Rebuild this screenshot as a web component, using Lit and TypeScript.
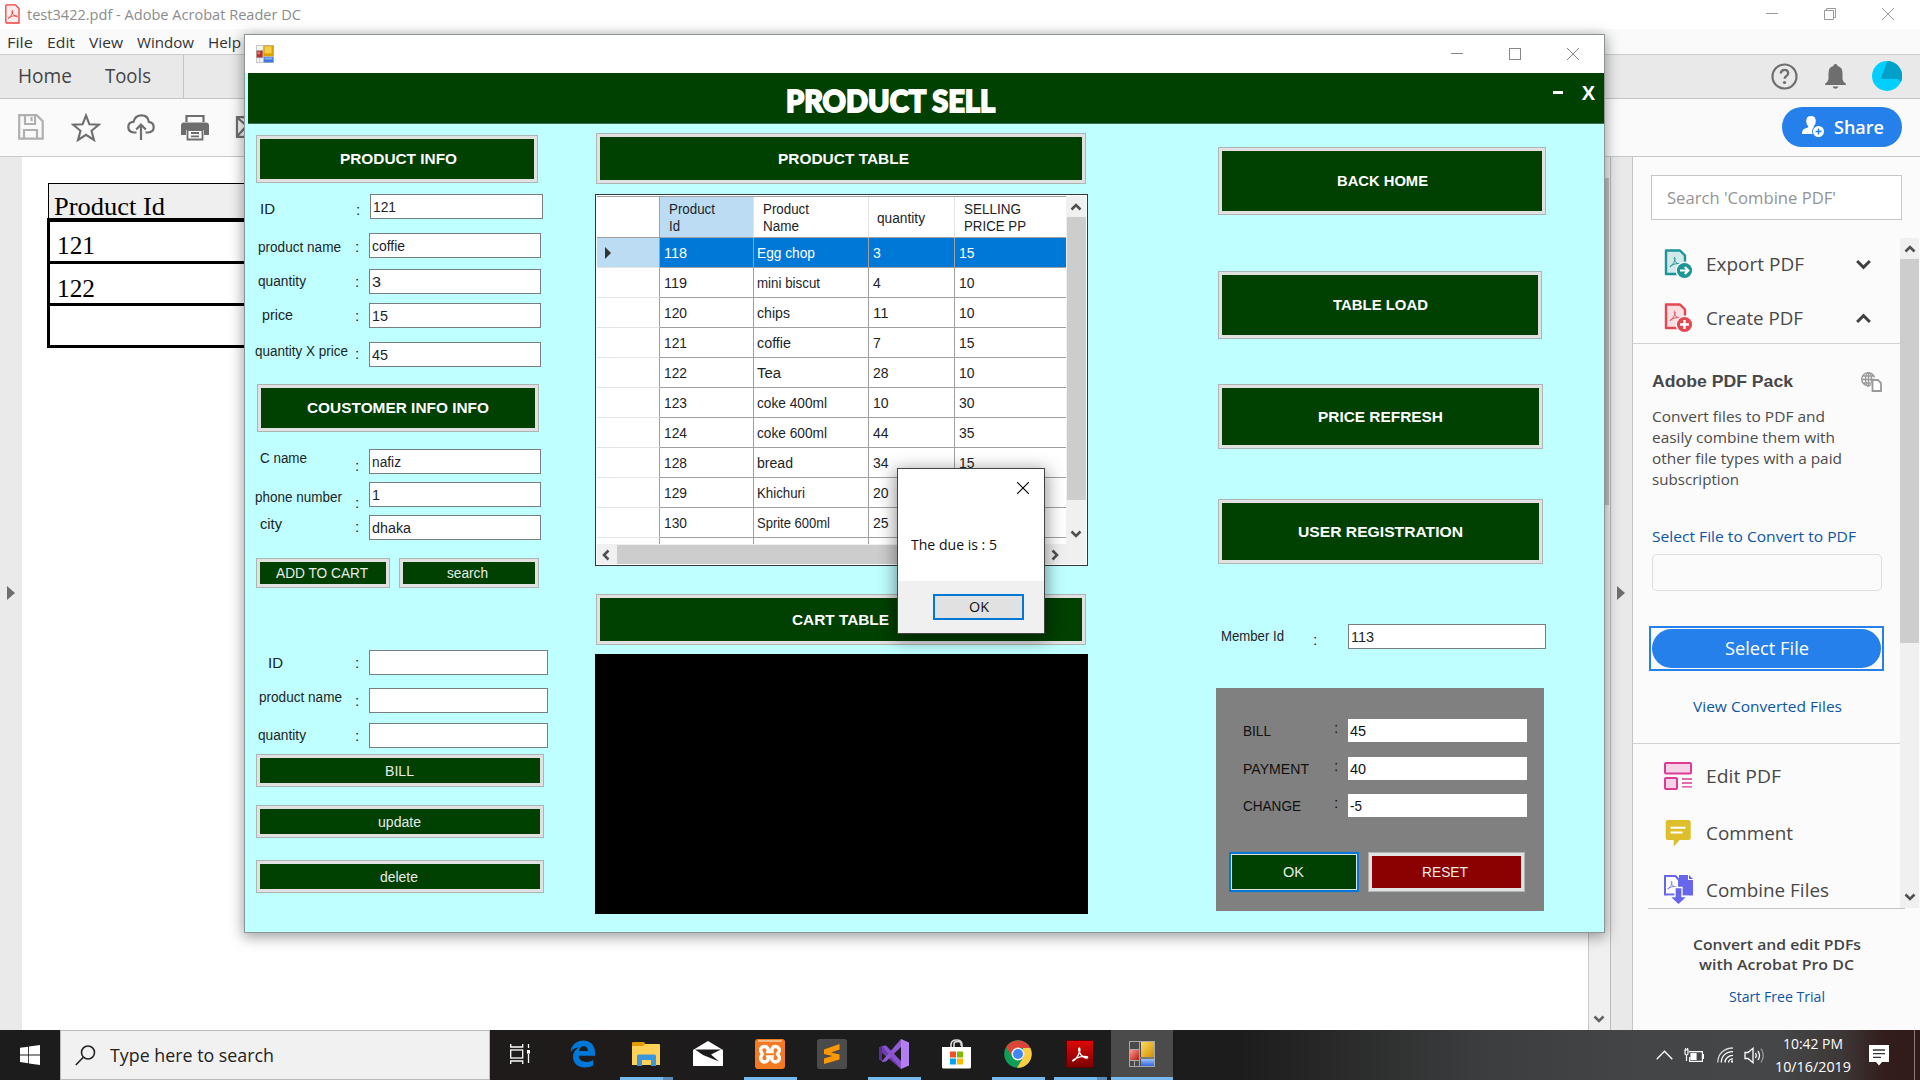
import { LitElement, html, css, svg, nothing } from "lit";
import { customElement, property } from "lit/decorators.js";

/* One line of text, condensed or widened so that it fills a given width. */
@customElement("fit-text")
class FitText extends LitElement {
  @property({ type: Number }) w = 0;
  @property() text = "";
  static styles = css`
    :host { display: block; flex: none; white-space: pre; }
    span { display: inline-block; transform-origin: 0 50%; }
  `;
  render() {
    return html`<span>${this.text}</span>`;
  }
  updated() {
    const s = this.renderRoot.querySelector("span") as HTMLElement;
    if (!this.w) return;
    s.style.transform = "none";
    const natural = s.getBoundingClientRect().width;
    s.style.transform = `scaleX(${this.w / natural})`;
    this.style.width = `${this.w}px`;
  }
}

const t = (text: string, w: number, cls = "") =>
  html`<fit-text class=${cls} .w=${w} .text=${text}></fit-text>`;

const chevron = (d: "up" | "down" | "left" | "right", size = 12, color = "#505050", sw = 2.6) => {
  const pts = {
    up: "1.5,8.5 6,4 10.5,8.5",
    down: "1.5,3.5 6,8 10.5,3.5",
    left: "8.5,1.5 4,6 8.5,10.5",
    right: "3.5,1.5 8,6 3.5,10.5",
  }[d];
  return html`<svg width=${size} height=${size} viewBox="0 0 12 12"><polyline points=${pts} fill="none" stroke=${color} stroke-width=${sw}/></svg>`;
};

const acroSwirl = svg`<path d="M3 17c2-1 5-5 6.500-9 .6-2 .6-4-.2-4s-1 2 0 4c1.300 3 4 5.500 7 6 1.500.2 2-.9.500-1.300-3-.7-8 .3-11 1.800C3.500 15.500 2 16.800 3 17z" fill="none" stroke="currentColor" stroke-width="1.300"/>`;

const formIcon = (s: number, h = s) => html`<svg width=${s} height=${h} viewBox="0 0 26 26" preserveAspectRatio="none">
  <rect width="26" height="26" fill="#b9b9b9"/><rect x="1" y="1" width="9" height="6" fill="#f4f4f4"/>
  <rect x="1" y="19" width="4" height="6" fill="#f4f4f4"/><rect x="6" y="19" width="4" height="6" fill="#f4f4f4"/>
  <rect x="1" y="8.500" width="8.500" height="9.500" fill="#b5332b"/><rect x="2" y="9.500" width="4" height="4" fill="#e07a70"/>
  <rect x="11.500" y="1" width="13.500" height="15" fill="#d9a300"/><rect x="12.500" y="2" width="10" height="10" fill="#f7ce46"/>
  <rect x="11.500" y="17.500" width="13.500" height="7.500" fill="#3f78e0"/><rect x="12.500" y="18" width="11" height="3" fill="#86aef5"/></svg>`;

const darkFormIcon = html`<svg width="26" height="26" viewBox="0 0 26 26">
  <defs><linearGradient id="fy" x2="1" y2="1"><stop offset="0" stop-color="#ffd95e"/><stop offset="1" stop-color="#cf9100"/></linearGradient>
  <linearGradient id="fb" x2="0" y2="1"><stop offset="0" stop-color="#9cc0ff"/><stop offset="1" stop-color="#3068dc"/></linearGradient>
  <linearGradient id="fr" x2="1" y2="1"><stop offset="0" stop-color="#ff9a92"/><stop offset="1" stop-color="#b41a12"/></linearGradient></defs>
  <rect x=".5" y=".5" width="25" height="25" fill="#4a4a4a" stroke="#a8a8a8"/>
  <path d="M0 8.500h11M10.500 0v26M0 19.500h11M5.500 19.500v6" stroke="#a8a8a8"/>
  <rect x="12" y="1" width="13" height="15" fill="url(#fy)"/><rect x="1" y="9" width="9" height="10" fill="url(#fr)"/>
  <rect x="12" y="18" width="13" height="7" fill="url(#fb)"/><path d="M11 17h15" stroke="#a8a8a8"/></svg>`;

const pdfTool = (color: string, tint: string, sign: unknown) => html`<svg width="29" height="30" viewBox="0 0 29 30">
  <path d="M2 1.500h14l5 5V25H2z" fill=${tint} stroke=${color} stroke-width="2.400" stroke-linejoin="round"/>
  <g style="color:${color}" transform="translate(4 5.500) scale(.72)">${acroSwirl}</g>
  <circle cx="20.500" cy="21.500" r="9" fill="#fbfbfb"/><circle cx="20.500" cy="21.500" r="7.600" fill=${color}/>${sign}</svg>`;

interface Field {
  gap: number; label: string; lx: number; lw: number; ly: number; cy: number;
  value?: string; vw?: number; ix?: number; iw?: number;
}
const productFields: Field[] = [
  { gap: 11, label: "ID", lx: 4, lw: 15, ly: 6, cy: 7, value: "121", vw: 23, ix: 114, iw: 173 },
  { gap: 14, label: "product name", lx: 2, lw: 83, ly: 5, cy: 5, value: "coffie", vw: 33 },
  { gap: 11, label: "quantity", lx: 2, lw: 48, ly: 3, cy: 4, value: "3", vw: 9 },
  { gap: 9, label: "price", lx: 6, lw: 31, ly: 3, cy: 4, value: "15", vw: 16 },
  { gap: 14, label: "quantity X price", lx: -1, lw: 93, ly: 0, cy: 3, value: "45", vw: 16 },
];
const customerFields: Field[] = [
  { gap: 17, label: "C name", lx: 4, lw: 47, ly: 0, cy: 8, value: "nafiz", vw: 29 },
  { gap: 8, label: "phone number", lx: -1, lw: 87, ly: 6, cy: 12, value: "1", vw: 8 },
  { gap: 8, label: "city", lx: 4, lw: 22, ly: 0, cy: 3, value: "dhaka", vw: 39 },
];
const editFields: Field[] = [
  { gap: 62, label: "ID", lx: 12, lw: 15, ly: 4, cy: 4, iw: 179 },
  { gap: 13, label: "product name", lx: 3, lw: 83, ly: 0, cy: 4, iw: 179 },
  { gap: 10, label: "quantity", lx: 2, lw: 48, ly: 3, cy: 4, iw: 179 },
];
const products: [string, string, number, string, string][] = [
  ["118", "Egg chop", 58, "3", "15"],
  ["119", "mini biscut", 63, "4", "10"],
  ["120", "chips", 33, "11", "10"],
  ["121", "coffie", 34, "7", "15"],
  ["122", "Tea", 24, "28", "10"],
  ["123", "coke 400ml", 70, "10", "30"],
  ["124", "coke 600ml", 70, "44", "35"],
  ["128", "bread", 36, "34", "15"],
  ["129", "Khichuri", 48, "20", ""],
  ["130", "Sprite 600ml", 73, "25", ""],
];

const field = (f: Field) => html`<div class="field" style="margin-top:${f.gap}px">
  <div class="flabel" style="width:${(f.ix ?? 113) - 15}px"><div style="margin:${f.ly}px 0 0 ${f.lx}px">${t(f.label, f.lw)}</div></div>
  <div class="colon" style="margin-top:${f.cy}px">:</div>
  <div class="input" style="width:${f.iw ?? 172}px">${f.value ? t(f.value, f.vw!) : nothing}</div>
</div>`;

@customElement("product-form")
class ProductForm extends LitElement {
  static styles = css`
    :host { display: flex; flex-direction: column; box-sizing: border-box; width: 1361px; height: 899px;
      border: 1px solid #8c9494; background: #c0ffff; box-shadow: 0 3px 13px 1px rgba(0,0,0,.38);
      font: 15.500px/18px "Liberation Sans", Arial, sans-serif; color: #1c2428; }
    * { box-sizing: border-box; }
    svg { display: block; flex: none; }
    .caption { display: flex; flex: none; align-items: center; height: 38px; background: #fff; padding: 0 25px 0 11px; }
    .caption .ctl { margin-left: auto; display: flex; gap: 46px; }
    .head { display: flex; flex: none; height: 51px; margin-left: 3px; background: #004000; color: #fff;
      border-bottom: 1px solid #3c6c50; }
    .brand { margin: 7px 0 0 538px; font: 900 30px/40px Lato, "Liberation Sans", sans-serif; -webkit-text-stroke: 1.800px #fff; }
    .hbtn { font: bold 20px/24px "Liberation Sans", sans-serif; margin: 8px 9px 0 0; }
    .min { width: 10px; height: 3px; background: #fff; margin: 18px 19px 0 auto; }
    .body { display: flex; flex: 1; }
    .left { width: 350px; padding-left: 11px; flex: none; }
    .mid { width: 493px; flex: none; }
    .right { margin-left: 128px; width: 330px; }
    .btn { display: flex; align-items: center; justify-content: center; border: 1px solid #adb5b5; background: #004000;
      box-shadow: inset 0 0 0 3px #e1e1e1; color: #e8ece8; }
    .bold { font-weight: bold; color: #fff; }
    .info { width: 282px; height: 48px; margin-top: 11px; padding-left: 3px; }
    .cust { margin: 17px 0 0 1px; padding-left: 0; }
    .pair { display: flex; gap: 9px; margin-top: 18px; height: 30px; }
    .add { width: 134px; padding-right: 2px; } .search { width: 140px; padding-right: 3px; }
    .long { width: 288px; height: 33px; margin-top: 6px; padding-right: 2px; }
    .upd { margin-top: 18px; } .del { margin-top: 22px; }
    .field { display: flex; height: 25px; align-items: flex-start; }
    .flabel { flex: none; }
    .colon { width: 15px; flex: none; padding-left: 1px; }
    .input { height: 25px; background: #fff; border: 1px solid #767e7e; padding: 2px 0 0 2px; line-height: 20px; flex: none; }
    .wide { width: 490px; height: 51px; margin: 9px 0 0 1px; padding-left: 4px; }
    .grid { margin-top: 10px; height: 372px; border: 1px solid #303838; background: #fff; padding: 1px; display: grid;
      grid-template-columns: 1fr 20px; grid-template-rows: 1fr 20px; }
    .cells { overflow: hidden; border-top: 1px solid #a0a0a0; }
    .r { display: grid; grid-template-columns: 63px 94px 115px 86px 1fr; height: 30px; }
    .r > div { border-right: 1px solid #a0a0a0; border-bottom: 1px solid #a0a0a0; padding: 5px 0 0 4px; line-height: 20px; overflow: hidden; }
    .r > div:nth-child(3) { padding-left: 3px; }
    .r > div:first-child { border-bottom-color: #e4e4e4; padding: 0 0 0 7px; display: flex; align-items: center; }
    .r > div:last-child { border-right: 0; }
    .r.h { height: 41px; }
    .r.h > div { padding: 4px 0 0 9px; line-height: 16.500px; border-right-color: #e4e4e4; border-bottom-color: #a0a0a0; }
    .r.h > div:first-child { border-right-color: #a0a0a0; }
    .r.h > .q { padding-top: 13px; padding-left: 8px; }
    .r.h > .on, .r.sel > div:first-child { background: #bcdcf4; }
    .r.sel > div { background: #0078d7; color: #fff; }
    .vs, .hs, .corner { background: #f0f0f0; }
    .vs { display: flex; flex-direction: column; align-items: center; justify-content: space-between; padding: 5px 0 4px; }
    .vthumb { width: 19px; height: 283px; background: #cdcdcd; margin: 4px 0 auto; }
    .hs { display: flex; align-items: center; justify-content: space-between; padding: 1px 5px 0 3px; }
    .hthumb { width: 380px; height: 19px; background: #cdcdcd; margin: 0 auto 0 5px; }
    .cart { margin-top: 28px; padding: 0 2px 0 0; }
    .black { background: #000; height: 260px; margin-top: 9px; }
    .b1 { margin: 23px 0 0 2px; width: 328px; height: 68px; }
    .b2 { margin: 56px 0 0 2px; width: 324px; height: 68px; }
    .b3 { margin: 45px 0 0 2px; width: 325px; height: 65px; }
    .b4 { margin: 50px 0 0 2px; width: 325px; height: 65px; }
    .member { display: flex; height: 25px; margin-top: 60px; padding-left: 5px; }
    .member fit-text { margin-top: 3px; }
    .member .mc { margin: 7px 0 0 29px; width: 35px; flex: none; }
    .member .input { width: 198px; }
    .member .input fit-text { margin-top: 0; }
    .panel { margin-top: 39px; height: 223px; width: 328px; background: #808080; padding: 31px 0 0 27px; display: flex;
      flex-direction: column; gap: 14.500px; color: #111; }
    .prow { display: grid; grid-template-columns: 91px 14px 179px; height: 23px; line-height: 23px; }
    .prow .c { line-height: 18px; }
    .prow .v { background: #fff; padding-left: 2px; line-height: 23px; }
    .acts { display: flex; gap: 9px; margin: 20px 0 0 -14px; height: 40px; }
    .ok { width: 130px; border: 2px solid #0078d7; box-shadow: inset 0 0 0 1px #e1e1e1; padding-right: 2px; }
    .reset { width: 157px; background: #8b0000; padding-right: 3px; }
  `;
  render() {
    return html`
      <div class="caption">${formIcon(18, 18)}
        <div class="ctl">
          <svg width="12" height="12"><path d="M0 5.500h12" stroke="#888"/></svg>
          <svg width="12" height="12"><rect x=".5" y=".5" width="11" height="11" fill="none" stroke="#888"/></svg>
          <svg width="12" height="12"><path d="M0 0l12 12M12 0L0 12" stroke="#888"/></svg>
        </div>
      </div>
      <div class="head"><div class="brand">${t("PRODUCT SELL", 209)}</div><div class="min"></div><div class="hbtn">X</div></div>
      <div class="body">
        <div class="left">
          <div class="btn bold info">${t("PRODUCT INFO", 117)}</div>
          ${productFields.map(field)}
          <div class="btn bold info cust">${t("COUSTOMER INFO INFO", 182)}</div>
          ${customerFields.map(field)}
          <div class="pair"><div class="btn add">${t("ADD TO CART", 92)}</div><div class="btn search">${t("search", 41)}</div></div>
          ${editFields.map(field)}
          <div class="btn long">${t("BILL", 29)}</div>
          <div class="btn long upd">${t("update", 43)}</div>
          <div class="btn long del">${t("delete", 38)}</div>
        </div>
        <div class="mid">
          <div class="btn bold wide">${t("PRODUCT TABLE", 131)}</div>
          <div class="grid">
            <div class="cells">
              <div class="r h"><div></div><div class="on">${t("Product", 46)}${t("Id", 11)}</div><div>${t("Product", 46)}${t("Name", 36)}</div>
                <div class="q">${t("quantity", 48)}</div><div>${t("SELLING", 57)}${t("PRICE PP", 62)}</div></div>
              ${products.map((p, i) => html`<div class="r ${i ? "" : "sel"}">
                <div>${i ? nothing : html`<svg width="8" height="12"><path d="M1 0l6 6-6 6z" fill="#333"/></svg>`}</div>
                <div>${t(p[0], 23)}</div><div>${t(p[1], p[2])}</div><div>${t(p[3], p[3].length * 7.8)}</div><div>${p[4] ? t(p[4], 15.5) : nothing}</div></div>`)}
              <div class="r"><div></div><div></div><div></div><div></div><div></div></div>
            </div>
            <div class="vs">${chevron("up")}<div class="vthumb"></div>${chevron("down")}</div>
            <div class="hs">${chevron("left")}<div class="hthumb"></div>${chevron("right")}</div>
            <div class="corner"></div>
          </div>
          <div class="btn bold wide cart">${t("CART TABLE", 97)}</div>
          <div class="black"></div>
        </div>
        <div class="right">
          <div class="btn bold b1">${t("BACK HOME", 91)}</div>
          <div class="btn bold b2">${t("TABLE LOAD", 95)}</div>
          <div class="btn bold b3">${t("PRICE REFRESH", 125)}</div>
          <div class="btn bold b4">${t("USER REGISTRATION", 165)}</div>
          <div class="member">${t("Member Id", 63)}<div class="mc">:</div><div class="input">${t("113", 23)}</div></div>
          <div class="panel">
            <div class="prow">${t("BILL", 28)}<div class="c">:</div><div class="v">${t("45", 16)}</div></div>
            <div class="prow">${t("PAYMENT", 66)}<div class="c">:</div><div class="v">${t("40", 16)}</div></div>
            <div class="prow">${t("CHANGE", 58)}<div class="c">:</div><div class="v">${t("-5", 12)}</div></div>
            <div class="acts"><div class="btn ok">${t("OK", 21)}</div><div class="btn reset">${t("RESET", 46)}</div></div>
          </div>
        </div>
      </div>`;
  }
}

@customElement("due-dialog")
class DueDialog extends LitElement {
  static styles = css`
    :host { display: flex; flex-direction: column; box-sizing: border-box; width: 148px; height: 166px; border: 1px solid #444;
      background: #fff; box-shadow: 0 4px 16px 2px rgba(0,0,0,.42); font: 14px/20px "Open Sans", "Noto Sans", sans-serif; color: #111; }
    .x { margin: 13px 0 0 119px; height: 12px; }
    .msg { margin: 41px 0 0 13px; }
    .foot { margin-top: auto; height: 52px; background: #f0f0f0; display: flex; align-items: center; justify-content: flex-end; padding-right: 20px; }
    .ok { box-sizing: border-box; width: 91px; height: 26px; border: 2px solid #0078d7; background: #e1e1e1; display: flex; align-items: center; justify-content: center; }
  `;
  render() {
    return html`<svg class="x" width="12" height="12"><path d="M0 0l12 12M12 0L0 12" stroke="#000" stroke-width="1.100"/></svg>
      <div class="msg">${t("The due is : 5", 86)}</div>
      <div class="foot"><div class="ok">${t("OK", 20)}</div></div>`;
  }
}

@customElement("task-bar")
class TaskBar extends LitElement {
  static styles = css`
    :host { display: flex; height: 50px; color: #fff; font: 15px/23px "Open Sans", "Noto Sans", sans-serif;
      background: linear-gradient(90deg, #1c1c1c 0, #1f1b1b 600px, #1c1c1c 800px, #1c1c1c 1240px, #3c3d3e 1480px, #444546 1640px, #454647 1780px, #3e3838 1840px, #331c1c 1885px, #301a1a 1920px); }
    * { box-sizing: border-box; }
    svg { display: block; flex: none; }
    .start, .slot { display: flex; align-items: center; justify-content: center; flex: none; }
    .start { width: 60px; }
    .find { width: 430px; border: 1px solid #b9b9b9; background: #f1f1f1; display: flex; align-items: center; gap: 14px; padding-left: 14px; color: #222; font-size: 17.500px; }
    .slot { width: 62px; height: 50px; border-bottom: 3px solid transparent; }
    .slot.first { width: 61px; padding-right: 2px; } .slot.second { width: 64px; }
    .line { border-image: linear-gradient(90deg, transparent 6px, #76b9ed 6px, #76b9ed 57px, transparent 57px) 1; border-width: 0 0 3px; border-style: solid; }
    .multi { border-image: linear-gradient(90deg, transparent 6px, #76b9ed 6px, #76b9ed 47px, #5a8ab3 47px, #5a8ab3 57px, transparent 57px) 1; border-width: 0 0 3px; border-style: solid; }
    .active { background: #4b4b4b; border-bottom-color: #76b9ed; }
    .tray { margin-left: auto; display: flex; align-items: center; }
    .clock { display: flex; flex-direction: column; align-items: center; margin: 0 18px 0 9px; width: 77px; }
    .note { margin-right: 25px; }
    .peek { width: 6px; height: 50px; border-left: 1px solid #8a7c7c; }
  `;
  render() {
    return html`
      <div class="start"><svg width="20" height="20" viewBox="0 0 20 20" fill="#fff"><path d="M0 2.800l8.200-1.100v7.800H0zM9 1.500L20 0v9.500H9zM0 10.400h8.200v7.800L0 17.100zM9 10.400h11V20L9 18.400z"/></svg></div>
      <div class="find"><svg width="21" height="21" viewBox="0 0 21 21" fill="none" stroke="#222" stroke-width="1.600"><circle cx="13" cy="7.500" r="6.500"/><path d="M8.300 12.200L.8 20"/></svg>${t("Type here to search", 164)}</div>
      <div class="slot first"><svg width="20" height="20" viewBox="0 0 20 20" fill="none" stroke="#fff" stroke-width="1.300"><path d="M.7 0v3h12V0M.7 20v-3h12v3M18.500 0v4M18.500 10v9"/><rect x=".7" y="6" width="12" height="8"/><rect x="17.600" y="6.600" width="2" height="2.400" fill="#fff"/></svg></div>
      <div class="slot second"><svg width="26" height="28" viewBox="0 0 26 28"><path d="M.5 12C1.500 4.500 7 .6 13.200.6 20.500.6 25 5.500 25 12.500v3.300H8.800c.3 4.500 3.800 6.200 7.500 6.200 2.800 0 5-.8 7-2v5.600c-2.200 1.200-5 1.900-8 1.900C7.500 27.500 3 22.800 3 17c0-4.500 2.500-8 6.500-9.800C6 7.400 2.500 9 .5 12zM9 11h9c0-3-1.500-4.800-4.300-4.800C11 6.200 9.300 8.300 9 11z" fill="#0078d7"/></svg></div>
      <div class="slot multi"><svg width="28" height="24" viewBox="0 0 28 24"><path d="M0 1q0-1 1-1h11l2 3v3H0z" fill="#e09c00"/><path d="M0 4h11l2-2h14q1 0 1 1v20H0z" fill="#ffd257"/><path d="M5 24V14q0-1.500 1.500-1.500h16q1.500 0 1.500 1.500v10h-5v-6h-9v6z" fill="#3a96dd"/></svg></div>
      <div class="slot"><svg width="30" height="25" viewBox="0 0 30 25"><path d="M0 9L15 0l15 9v16H0z" fill="#fff"/><path d="M2 8.500h26L18 13.500l8 7-16-6.500z" fill="#1c1c1c"/></svg></div>
      <div class="slot line"><svg width="30" height="30" viewBox="0 0 30 30"><rect width="30" height="30" rx="3" fill="#f37a22"/><rect x="3" y="1" width="24" height="2" rx="1" fill="#fbb98a"/><path d="M9.500 7.500c3 0 4.200 2.500 3.500 5h4c-.7-2.500.5-5 3.500-5s4.500 3 3.500 5l-1.500 2.500 1.500 2.500c1 2.500-.5 5.500-3.500 5.500s-4.200-2.500-3.500-5h-4c.7 2.500-.5 5-3.500 5S5 20 6 17.500L7.500 15 6 12.500c-1-2.500.5-5 3.500-5z" fill="none" stroke="#fff" stroke-width="3.400"/></svg></div>
      <div class="slot"><svg width="30" height="30" viewBox="0 0 30 30"><rect width="30" height="30" rx="2.500" fill="#4b4b4b"/><path d="M7 10.500L22.500 5v5.500L14 13.500l8.500 2v5L7 25v-5.500l8.500-2.500L7 15z" fill="#ff9800"/></svg></div>
      <div class="slot line"><svg width="30" height="30" viewBox="0 0 30 30"><path d="M0 8.500l3-1.500L22 23.500V30L3 14v8l-3-1.500z" fill="#6a3fa8"/><path d="M0 8.500L3 7v15l-3-1.500z" fill="#5a2d91"/><path d="M3 22L22 0v8L7 22.500 3 23z" fill="#8f5bd0"/><path d="M3 7l4-.5L22 22v8z" fill="#8a52cf"/><path d="M22 0l8 3.500v23L22 30z" fill="#b37ff0"/></svg></div>
      <div class="slot"><svg width="29" height="30" viewBox="0 0 29 30"><path d="M9 10V6q0-5 5.500-5T20 6v4M12 10V5q0-2.500 4-2.500T19 7" fill="none" stroke="#ddd" stroke-width="1.600"/><path d="M0 8h29v20q0 1.500-1.500 1.500h-26Q0 29.500 0 28z" fill="#fff"/><rect x="8" y="12.500" width="6" height="6" fill="#f25022"/><rect x="15" y="12.500" width="6" height="6" fill="#7fba00"/><rect x="8" y="19.500" width="6" height="6" fill="#00a4ef"/><rect x="15" y="19.500" width="6" height="6" fill="#ffb900"/></svg></div>
      <div class="slot line"><svg width="28" height="28" viewBox="0 0 28 28"><circle cx="14" cy="14" r="13.800" fill="#0f9d58"/><path d="M2 7.300A13.800 13.800 0 0 1 26.300 8H14l-5 9z" fill="#db4437"/><path d="M26.300 8A13.800 13.800 0 0 1 13 27.800L19.600 17 19 8z" fill="#ffcd40"/><circle cx="14" cy="14" r="6.500" fill="#f1f1f1"/><circle cx="14" cy="14" r="5" fill="#4285f4"/></svg></div>
      <div class="slot multi"><svg width="28" height="28" viewBox="0 0 28 28"><defs><linearGradient id="ar" x2="0" y2="1"><stop offset="0" stop-color="#e00808"/><stop offset="1" stop-color="#7c0202"/></linearGradient></defs><rect x=".5" y=".5" width="27" height="27" fill="url(#ar)" stroke="#5c0000"/><g color="#fff" transform="translate(4 4)">${acroSwirl}</g></svg></div>
      <div class="slot active">${darkFormIcon}</div>
      <div class="tray">
        <svg width="17" height="10" viewBox="0 0 17 10"><path d="M.7 9.300L8.500 1.200l7.800 8.100" fill="none" stroke="#fff" stroke-width="1.300"/></svg>
        <svg style="margin-left:11px" width="20" height="15" viewBox="0 0 20 15" fill="none" stroke="#fff" stroke-width="1.200"><path d="M5 3.600h13.400v9.800H5.600V9M18.400 6.500h1v4h-1M1 2v3.500q0 1.500 1.500 1.500T4 5.500V2zM1.600 0v2M3.600 0v2M2.500 7v6"/><path d="M7 5.500h5v6H7z" fill="#fff"/></svg>
        <svg style="margin-left:13px" width="17" height="16" viewBox="0 0 17 16" fill="none" stroke="#fff" stroke-width="1.300"><path d="M.8 15.500C.8 7 7 1 16 1" opacity=".8"/><path d="M4.300 15.500C4.300 9 9 4.600 16 4.600M8 15.500c0-4 3.500-7.200 8-7.200"/><path d="M11.500 15.500c0-2 2-3.700 4.500-3.700"/><rect x="14" y="13.500" width="2" height="2" fill="#fff" stroke="none"/></svg>
        <svg style="margin-left:10px" width="21" height="17" viewBox="0 0 21 17" fill="none" stroke="#fff" stroke-width="1.300"><path d="M1 5.500h3L9 1.300v14.400L4 11.500H1zM11.500 6q1.500 2.500 0 5M14 4q3 4.500 0 9"/><path d="M17 1.500q4.500 7 0 14" stroke="#999"/></svg>
        <div class="clock">${t("10:42 PM", 60)}${t("10/16/2019", 76)}</div>
        <svg class="note" width="20" height="21" viewBox="0 0 20 21"><path d="M0 0h20v17h-7l-3 3.500L7 17H0z" fill="#fff"/><path d="M4 5h12M4 8.700h12M4 12.400h8" stroke="#333" stroke-width="1.300"/></svg>
        <div class="peek"></div>
      </div>`;
  }
}

@customElement("reader-window")
class ReaderWindow extends LitElement {
  static styles = css`
    :host { display: flex; flex-direction: column; height: 1030px; background: #fff; color: #444;
      font: 15px/20px "Open Sans", "Noto Sans", sans-serif; }
    * { box-sizing: border-box; }
    svg { display: block; flex: none; }
    .title { height: 29px; flex: none; display: flex; align-items: center; padding: 0 26px 1px 5px; gap: 7px; color: #8c8c8c; font-size: 15px; }
    .ctl { margin-left: auto; display: flex; gap: 46px; }
    .menu { height: 26px; flex: none; display: flex; align-items: center; padding: 1px 0 0 7px; gap: 14px; background: #fafafa; border-bottom: 1px solid #cbcbcb; font-size: 15px; color: #333; }
    .tabs { height: 44px; flex: none; display: flex; align-items: center; background: #e9e9e9; border-bottom: 1px solid #c4c4c4; font-size: 19.500px; padding: 0 18px; }
    .tabs .two { display: flex; gap: 33px; height: 43px; align-items: center; width: 166px; border-right: 1px solid #c4c4c4; padding-bottom: 2px; }
    .acct { margin-left: auto; display: flex; align-items: center; gap: 27px; padding-bottom: 1px; }
    .acct svg:last-child { margin-left: -1px; }
    .tools { height: 58px; flex: none; display: flex; align-items: center; background: #fafafa; border-bottom: 1px solid #c8c8c8; padding: 0 18px; }
    .ticons { display: flex; align-items: center; gap: 26px; padding-bottom: 1px; }
    .ticons svg:nth-child(2) { margin-left: 1px; }
    .share { margin-left: auto; width: 120px; height: 40px; border-radius: 20px; background: #2680eb; color: #fff; display: flex; align-items: center; gap: 9px; padding-left: 20px; font-size: 18px; font-weight: 600; margin-bottom: 2px; }
    .main { flex: 1; display: flex; min-height: 0; }
    .gutter { width: 22px; background: #eaeaea; padding: 429px 0 0 7px; flex: none; }
    .doc { flex: 1; padding: 26px 0 0 25px; font: 25px/30px "Liberation Serif", "Times New Roman", serif; color: #000; }
    .pt { width: 400px; }
    .pt .th { margin-left: 1px; height: 35px; border: 1px solid #000; border-bottom: 0; background: #efefef; padding: 8px 0 0 5px; }
    .pt .td { height: 42px; border: solid #000; border-width: 3px 3px 0; padding: 10px 0 0 7px; }
    .pt .first { height: 43px; border-top-width: 4px; padding-top: 9px; }
    .pt .last { height: 45px; border-bottom-width: 3px; }
    .dscroll { width: 23px; border-left: 1px solid #c8c8c8; border-right: 1px solid #bcbcbc; background: #f0f0f0; display: flex; flex-direction: column; align-items: center; justify-content: space-between; padding: 21px 1px 5px 0; flex: none; }
    .dthumb { width: 19px; height: 327px; background: #c2c2c2; }
    .strip { width: 22px; background: #e9e9e9; border-right: 1px solid #c4c4c4; padding: 429px 0 0 6px; flex: none; }
    .panel { width: 287px; flex: none; background: #fbfbfb; display: flex; flex-direction: column; }
    .psearch { margin: 18px 18px 18px; height: 45px; border: 1px solid #c6c6c6; background: #fff; display: flex; align-items: center; padding-left: 15px; color: #949494; font-size: 17px; flex: none; }
    .pscroll { height: 670px; display: flex; flex: none; }
    .pc { width: 267px; overflow: hidden; }
    .pbar { width: 20px; background: #f0f0f0; border-right: 1px solid #fbfbfb; display: flex; flex-direction: column; align-items: center; padding: 5px 0; }
    .pthumb { width: 19px; height: 384px; background: #cdcdcd; margin: 4px 0 auto; }
    .tool { display: flex; align-items: center; height: 52px; padding: 0 28px 0 31px; font-size: 19px; color: #484848; }
    .tool fit-text { margin-left: 13px; }
    .tool .chev { margin-left: auto; }
    .tool.open { height: 54px; padding-top: 3px; border-bottom: 1px solid #d2d2d2; }
    .tool.t57 { height: 57px; }
    .pack { display: flex; align-items: center; justify-content: space-between; margin: 28px 18px 0 19px; height: 20px; font: bold 17px/20px "Liberation Sans", Arial, sans-serif; color: #484848; }
    .para { margin: 14px 0 0 19px; line-height: 21px; font-size: 15px; color: #4b4b4b; }
    .link { color: #0d56a6; font-size: 15px; }
    .sel { margin: 35px 0 0 19px; padding-top: 1px; height: 20px; }
    .box { margin: 9px 18px 0 19px; height: 37px; border: 1px solid #dedede; border-radius: 5px; }
    .focus { margin: 35px 16px 0 16px; height: 45px; border: 2px solid #2680eb; padding: 1px; }
    .pill { height: 39px; border-radius: 20px; background: #2680eb; color: #fff; display: flex; align-items: center; justify-content: center; font-size: 18.500px; padding-bottom: 1px; }
    .view { display: flex; justify-content: center; margin: 25px 0 27px; padding-left: 1px; }
    .rule { height: 1px; background: #d2d2d2; margin-bottom: 3px; }
    .promo { margin: 0 15px; border-top: 1px solid #c4c4c4; flex: 1; display: flex; flex-direction: column; align-items: center; padding-top: 25px; font-weight: 600; font-size: 15px; color: #444; }
    .promo .link { font-weight: 400; margin-top: 12px; font-size: 15px; }
  `;
  render() {
    const tri = html`<svg width="9" height="14"><path d="M0 0l8 7-8 7z" fill="#6e6e6e"/></svg>`;
    return html`
      <div class="title">
        <svg width="15" height="20" viewBox="0 0 15 20"><path d="M1.500.8h9L14 4.500V19H1.500Q.8 19 .8 18V1.500z" fill="#fdeceb" stroke="#f0403c" stroke-width="1.300"/><g color="#e02a26" transform="translate(1.500 4) scale(.62)" stroke-width="2">${acroSwirl}</g></svg>
        ${t("test3422.pdf - Adobe Acrobat Reader DC", 274)}
        <div class="ctl">
          <svg width="12" height="12"><path d="M0 5.500h12" stroke="#999"/></svg>
          <svg width="12" height="12" fill="none" stroke="#999"><path d="M.5 2.500h9v9h-9zM2.500 2.500v-2h9v9h-2"/></svg>
          <svg width="12" height="12"><path d="M0 0l12 12M12 0L0 12" stroke="#999"/></svg>
        </div>
      </div>
      <div class="menu">${t("File", 26)}${t("Edit", 28)}${t("View", 34)}${t("Window", 57)}${t("Help", 33)}</div>
      <div class="tabs"><div class="two">${t("Home", 54)}${t("Tools", 46)}</div>
        <div class="acct">
          <svg width="27" height="27" viewBox="0 0 27 27"><circle cx="13.500" cy="13.500" r="12" fill="none" stroke="#6e6e6e" stroke-width="2.200"/><path d="M9.800 10.500q.2-3.600 3.700-3.600t3.700 3.200q0 2-2 3.200-1.600 1-1.600 2.500" fill="none" stroke="#6e6e6e" stroke-width="2.300"/><circle cx="13.500" cy="19.500" r="1.600" fill="#6e6e6e"/></svg>
          <svg width="21" height="25" viewBox="0 0 21 25" fill="#6e6e6e"><path d="M10.500 0q2 0 2.200 2 4.800 1.200 4.800 7v6q.5 3 3.300 4.500v1.500H.2v-1.500Q3 18 3.500 15V9q0-5.800 4.800-7 .2-2 2.200-2zM7.500 22.500h6q-1 2.300-3 2.300t-3-2.300z"/></svg>
          <svg width="30" height="30" viewBox="0 0 30 30"><circle cx="15" cy="15" r="15" fill="#00d0ff"/><path d="M15.500 0A15 15 0 0 1 29 21l-3-3H8.500z" fill="#00a0c8"/></svg>
        </div>
      </div>
      <div class="tools">
        <div class="ticons">
          <svg width="26" height="26" viewBox="0 0 26 26" fill="none" stroke="#b0b0b0" stroke-width="2.200"><path d="M1.200 1.200h17.500l6 6v17.500H1.200z"/><path d="M7 1v9h10V1M6 25v-9h13v9M13.500 3v4"/></svg>
          <svg width="30" height="29" viewBox="0 0 30 29" fill="none" stroke="#6e6e6e" stroke-width="2.100"><path d="M15 2.500l3.400 8.800 9.400.5-7.300 6 2.500 9.200-8-5.200-8 5.200 2.500-9.200-7.300-6 9.400-.5z"/></svg>
          <svg width="28" height="26" viewBox="0 0 28 26" fill="none" stroke="#6e6e6e" stroke-width="2.200"><path d="M9.500 18.500H7Q1.300 18 1.300 13T6.500 7.800Q8 1.300 14.500 1.300t7.300 6.500Q26.700 8.500 26.700 13.200T21 18.500h-2.500M14 26V11M9.200 15.500L14 10.500l4.800 5"/></svg>
          <svg width="28" height="27" viewBox="0 0 28 27"><path d="M5.500 8V2h17v6" fill="none" stroke="#6e6e6e" stroke-width="2.200"/><path d="M3 8.500h22q3 0 3 3V21h-5v-5H5v5H0v-9.500q0-3 3-3z" fill="#6e6e6e"/><path d="M6.500 16h15v9.500h-15zM10 19h8M10 22.300h8" fill="none" stroke="#6e6e6e" stroke-width="1.800"/></svg>
          <svg width="30" height="22" viewBox="0 0 30 22" fill="none" stroke="#6e6e6e" stroke-width="2.200"><path d="M2 1.200h26v19.600H2zM2 1.500l13 11 13-11M2 20.500l9-10"/></svg>
        </div>
        <div class="share"><svg width="23" height="22" viewBox="0 0 23 22"><path d="M9 0q4.800 0 4.800 5.200 0 3-2 5v1.500l3 1.300-3 5H0q0-4 2-5l4.200-1.800v-1q-2-2-2-5Q4.200 0 9 0z" fill="#fff"/><circle cx="16.500" cy="15.500" r="6.500" fill="#2680eb"/><circle cx="16.500" cy="15.500" r="5.500" fill="#fff"/><path d="M13.500 15.500h6M16.500 12.500v6" stroke="#2680eb" stroke-width="1.400"/></svg>${t("Share", 50)}</div>
      </div>
      <div class="main">
        <div class="gutter">${tri}</div>
        <div class="doc"><div class="pt">
          <div class="th">${t("Product Id", 111)}</div>
          <div class="td first">${t("121", 38)}</div><div class="td">${t("122", 38)}</div><div class="td last"></div>
        </div></div>
        <div class="dscroll"><div class="dthumb"></div>${chevron("down", 12, "#606060")}</div>
        <div class="strip">${tri}</div>
        <div class="panel">
          <div class="psearch">${t("Search 'Combine PDF'", 169)}</div>
          <div class="pscroll">
            <div class="pc">
              <div class="tool">${pdfTool("#1c9599", "#d2e8e9", svg`<path d="M16 21.500h8M20.800 18l3.500 3.500-3.500 3.500" fill="none" stroke="#fff" stroke-width="2.200"/>`)}${t("Export PDF", 98)}<div class="chev">${chevron("down", 17, "#404040", 2.1)}</div></div>
              <div class="tool open">${pdfTool("#e34850", "#f9dfe1", svg`<path d="M16 21.500h9M20.500 17v9" stroke="#fff" stroke-width="2.400"/>`)}${t("Create PDF", 97)}<div class="chev">${chevron("up", 17, "#404040", 2.1)}</div></div>
              <div class="pack">${t("Adobe PDF Pack", 141)}<svg width="21" height="20" viewBox="0 0 21 20" fill="none" stroke="#9a9a9a" stroke-width="1.400"><path d="M13.500 5.500A6.500 6.500 0 1 0 8 13.700M1 7.500h12M7.500 1v12.500M2 4h11M2 11h7"/><ellipse cx="7.500" cy="7.500" rx="3" ry="6.500"/><path d="M11.500 8h5.500l3 3v8h-8.500z" fill="#fff" stroke-width="1.800"/></svg></div>
              <div class="para">${t("Convert files to PDF and", 173)}${t("easily combine them with", 183)}${t("other file types with a paid", 190)}${t("subscription", 87)}</div>
              <div class="link sel">${t("Select File to Convert to PDF", 204)}</div>
              <div class="box"></div>
              <div class="focus"><div class="pill">${t("Select File", 84)}</div></div>
              <div class="link view">${t("View Converted Files", 149)}</div>
              <div class="rule"></div>
              <div class="tool t57"><svg width="29" height="28" viewBox="0 0 29 28"><g fill="#f7d3e8" stroke="#dc3b96" stroke-width="2"><rect x="1" y="1" width="26" height="10.500" rx="1"/><rect x="1" y="16" width="12" height="11" rx="1"/></g><path d="M18 17h10M18 21h10M18 24.800h10" stroke="#dc3b96" stroke-width="1.300"/></svg>${t("Edit PDF", 75)}</div>
              <div class="tool t57"><svg width="29" height="28" viewBox="0 0 29 28"><path d="M3.500 1h21Q26.700 1 26.700 3v16q0 2-2 2h-9l-6 6.500V21h-6q-2 0-2-2V3q0-2 2-2z" fill="#dcbf2b"/><path d="M6.500 8.800h15M6.500 13.500h12" stroke="#fff" stroke-width="2"/></svg>${t("Comment", 87)}</div>
              <div class="tool t57"><svg width="29" height="30" viewBox="0 0 29 30"><path d="M15 0h9v5h5v15.500H15z" fill="#6767ec"/><path d="M25 0l4 4h-4z" fill="#6767ec"/><path d="M1 1h10.500L15 5v14.500H1z" fill="#fff" stroke="#6767ec" stroke-width="2"/><g color="#6767ec" transform="translate(2 4) scale(.6)">${acroSwirl}</g><path d="M11 12.500h7v9h5.500L14.500 30 5.500 21.500H11z" fill="#6767ec" stroke="#fff" stroke-width="1.300"/></svg>${t("Combine Files", 123)}</div>
            </div>
            <div class="pbar">${chevron("up")}<div class="pthumb"></div>${chevron("down")}</div>
          </div>
          <div class="promo">${t("Convert and edit PDFs", 168)}${t("with Acrobat Pro DC", 155)}<div class="link">${t("Start Free Trial", 96)}</div></div>
        </div>
      </div>`;
  }
}

@customElement("app-root")
class AppRoot extends LitElement {
  static styles = css`
    :host { display: block; position: relative; width: 1920px; height: 1080px; overflow: hidden; }
    product-form { position: absolute; left: 244px; top: 34px; }
    due-dialog { position: absolute; left: 897px; top: 468px; }
  `;
  render() {
    return html`<reader-window></reader-window><task-bar></task-bar><product-form></product-form><due-dialog></due-dialog>`;
  }
}
